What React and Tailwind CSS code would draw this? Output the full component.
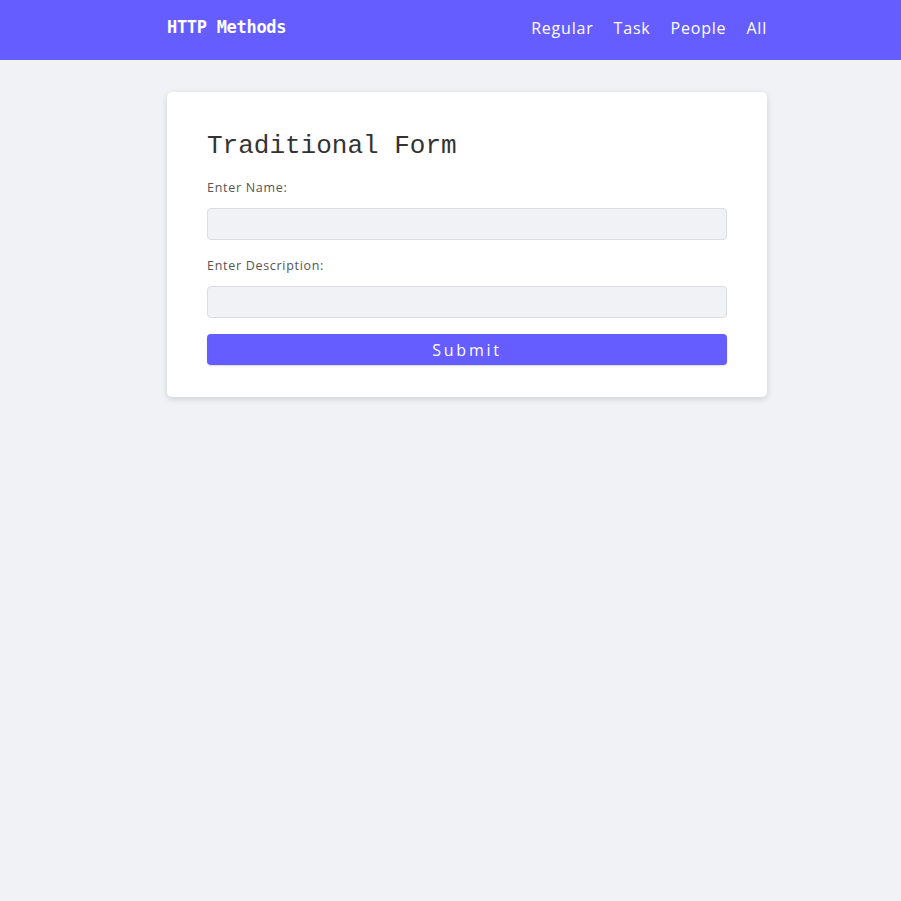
export default function App() {
  const sans = { fontFamily: '"Open Sans", "Noto Sans", sans-serif' };
  return (
    <div className="min-h-[901px] bg-[#f1f2f6]" style={sans}>
      <nav className="h-[60px] bg-[#655dff] text-white">
        <div className="ml-[167px] flex h-full w-[600px] items-center justify-between pb-[5px]">
          <span className="text-[17px] font-bold font-['DejaVu_Sans_Mono',monospace] tracking-[-0.3px]">HTTP Methods</span>
          <div className="flex items-center gap-[20px] text-[16px] tracking-[0.8px]">
            <a>Regular</a>
            <a>Task</a>
            <a>People</a>
            <a>All</a>
          </div>
        </div>
      </nav>
      <div className="ml-[167px] mt-[32px] w-[600px] rounded-[5px] bg-white px-[40px] pt-[34px] pb-[32px] shadow-[0_2px_6px_rgba(0,0,0,0.15)]">
        <h1 className="font-['Liberation_Mono',monospace] text-[26px] leading-[40px] text-[#333]">Traditional Form</h1>
        <form className="flex flex-col">
          <label className="mt-[14px] text-[12.5px] leading-[16px] tracking-[0.7px] text-[#555]">Enter Name:</label>
          <input className="mt-[12px] h-[32px] rounded-[4px] border border-[#dcdde4] bg-[#f1f2f6] px-2" />
          <label className="mt-[18px] text-[12.5px] leading-[16px] tracking-[0.7px] text-[#555]">Enter Description:</label>
          <input className="mt-[12px] h-[32px] rounded-[4px] border border-[#dcdde4] bg-[#f1f2f6] px-2" />
          <button type="button" className="mt-[16px] h-[31px] rounded-[4px] bg-[#655dff] text-[16px] tracking-[2.8px] text-white shadow-[0_1px_2px_rgba(0,0,0,0.15)]">Submit</button>
        </form>
      </div>
    </div>
  );
}
